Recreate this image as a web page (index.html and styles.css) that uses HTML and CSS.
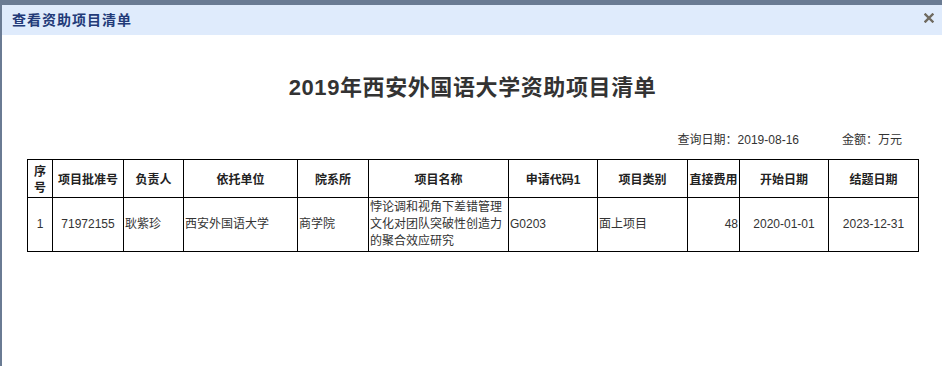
FILE: index.html
```html
<!DOCTYPE html>
<html lang="zh-CN">
<head>
<meta charset="utf-8">
<title>查看资助项目清单</title>
<link rel="stylesheet" href="styles.css">
</head>
<body>
<div class="dialog">
  <div class="dialog-bar">
    <span class="dialog-title">查看资助项目清单</span>
    <span class="dialog-close" aria-label="关闭">
      <svg width="10" height="10" viewBox="0 0 10 10"><path d="M1.5 1.5 L8.5 8.5 M8.5 1.5 L1.5 8.5" stroke="#6f6a60" stroke-width="2.4" stroke-linecap="square"/></svg>
    </span>
  </div>
  <div class="dialog-body">
    <h1 class="report-title">2019年西安外国语大学资助项目清单</h1>
    <div class="report-meta">
      <span>查询日期：2019-08-16</span>
      <span class="meta-amount">金额：万元</span>
    </div>
    <table class="report-table">
      <colgroup>
        <col class="c-no"><col class="c-id"><col class="c-person"><col class="c-unit"><col class="c-dept"><col class="c-name"><col class="c-code"><col class="c-type"><col class="c-fee"><col class="c-start"><col class="c-end">
      </colgroup>
      <thead>
        <tr>
          <th>序号</th><th>项目批准号</th><th>负责人</th><th>依托单位</th><th>院系所</th><th>项目名称</th><th>申请代码1</th><th>项目类别</th><th>直接费用</th><th>开始日期</th><th>结题日期</th>
        </tr>
      </thead>
      <tbody>
        <tr>
          <td class="center">1</td>
          <td class="center">71972155</td>
          <td>耿紫珍</td>
          <td>西安外国语大学</td>
          <td>商学院</td>
          <td>悖论调和视角下差错管理文化对团队突破性创造力的聚合效应研究</td>
          <td>G0203</td>
          <td>面上项目</td>
          <td class="right">48</td>
          <td class="center">2020-01-01</td>
          <td class="center">2023-12-31</td>
        </tr>
      </tbody>
    </table>
  </div>
</div>
</body>
</html>
```
FILE: styles.css
```css
html, body {
  margin: 0;
  padding: 0;
  background: #ffffff;
}
body {
  font-family: "Liberation Sans", "Noto Sans CJK SC", sans-serif;
  font-size: 12px;
  color: #333333;
}
.dialog {
  height: 361px;
  border-top: 5px solid #6a7b93;
  border-left: 2px solid #6a7b93;
  background: #ffffff;
}
.dialog-bar {
  height: 30px;
  background: #dfebfc;
  display: flex;
  align-items: center;
  justify-content: space-between;
  padding: 0 8px 0 10px;
}
.dialog-title {
  font-size: 14px;
  font-weight: bold;
  color: #223a78;
  letter-spacing: 1px;
  margin-top: -2px;
}
.dialog-close {
  display: flex;
  margin-top: -4px;
}
.dialog-body {
  padding: 38px 24px 0 25px;
}
.report-title {
  margin: 0;
  text-align: center;
  font-size: 22px;
  line-height: 30px;
  font-weight: bold;
  color: #333333;
  letter-spacing: 0.6px;
}
.report-meta {
  margin-top: 29px;
  display: flex;
  justify-content: flex-end;
  padding-right: 16px;
  line-height: 16px;
  color: #333333;
}
.meta-amount {
  margin-left: 43px;
}
.report-table {
  margin-top: 11px;
  width: 891px;
  table-layout: fixed;
  border-collapse: collapse;
}
.report-table th,
.report-table td {
  border: 1px solid #000000;
  padding: 1px 1px;
  font-size: 12px;
  color: #333333;
  vertical-align: middle;
}
.report-table th {
  height: 34px;
  font-weight: bold;
  text-align: center;
  line-height: 16px;
  color: #222222;
  padding-top: 3px;
  padding-bottom: 0;
}
.report-table td {
  height: 51px;
  line-height: 17px;
  text-align: left;
}
.report-table td.center { text-align: center; }
.report-table td.right { text-align: right; }
.c-no { width: 25px; }
.c-id { width: 71px; }
.c-person { width: 60px; }
.c-unit { width: 114px; }
.c-dept { width: 71px; }
.c-name { width: 140px; }
.c-code { width: 89px; }
.c-type { width: 90px; }
.c-fee { width: 52px; }
.c-start { width: 89px; }
.c-end { width: 90px; }
```
